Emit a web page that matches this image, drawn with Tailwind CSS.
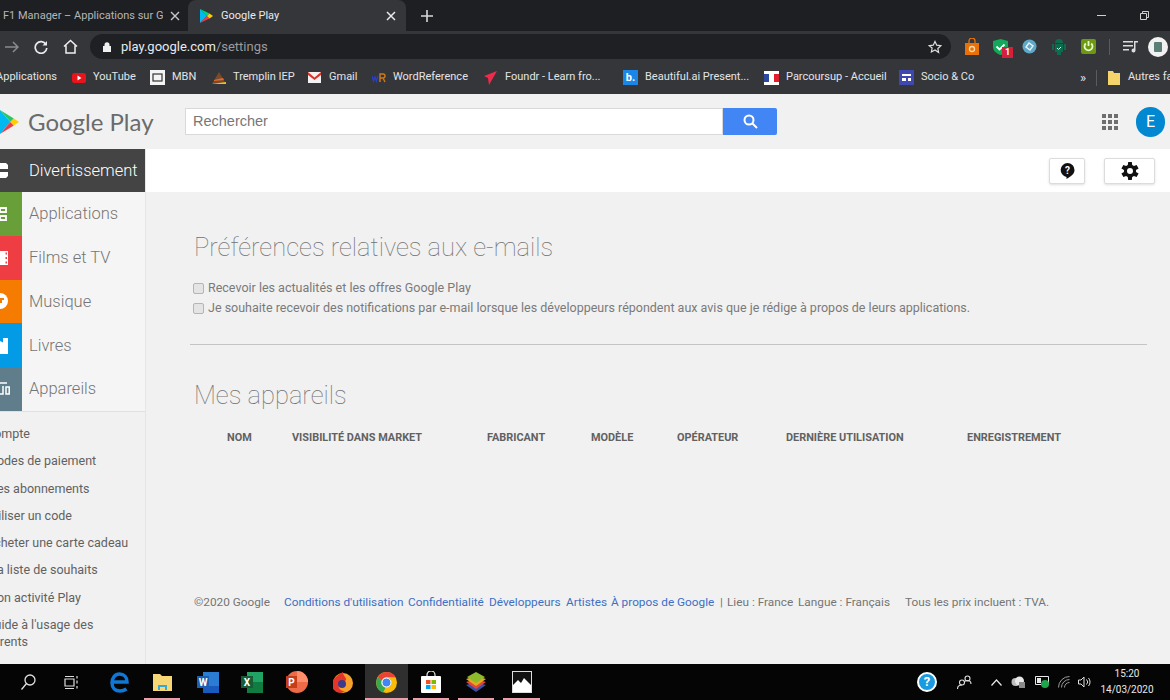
<!DOCTYPE html>
<html lang="fr">
<head>
    <meta charset="UTF-8">
    <title>Google Play</title>
    <script src="https://cdn.jsdelivr.net/npm/@tailwindcss/browser@4"></script>
</head>
<body class="bg-[#f1f1f1] font-['Roboto',sans-serif]">
<div class="w-[1170px] h-[700px] overflow-hidden flex flex-col">

    <!-- tabs -->
    <div class="h-[31px] bg-[#1e1f23] flex items-end text-[11px] shrink-0">
        <div class="w-[188px] h-[31px] pl-[3px] flex items-center text-[#b5b6b8] shrink-0">
            <span class="w-[160px] pt-[2px] whitespace-nowrap overflow-hidden">F1 Manager – Applications sur Google Play</span>
            <svg class="ml-[7px]" width="10" height="10" viewBox="0 0 10 10" stroke="#c8c8c8" stroke-width="1.4"><path d="M1 1l8 8M9 1l-8 8"/></svg>
        </div>
        <div class="w-[218px] h-[31px] bg-[#35363a] rounded-t-lg flex items-center pl-[12px] text-[#e8eaed] shrink-0">
            <svg width="13" height="14" viewBox="0 0 13 14"><path d="M0 0v14l7-7z" fill="#00b9f1"/><path d="M0 0l7 7 2.500-2.500z" fill="#00d77a"/><path d="M0 14l7-7 2.500 2.500z" fill="#ef3b45"/><path d="M9.500 4.500L7 7l2.500 2.500L13 7z" fill="#ffce00"/></svg>
            <span class="ml-[8px] pt-[2px] w-[165px]">Google Play</span>
            <svg width="10" height="10" viewBox="0 0 10 10" stroke="#e8eaed" stroke-width="1.5"><path d="M1 1l8 8M9 1l-8 8"/></svg>
        </div>
        <svg class="ml-[15px] mb-[9px]" width="12" height="12" viewBox="0 0 12 12" stroke="#d8d8d8" stroke-width="1.600"><path d="M6 0v12M0 6h12"/></svg>
        <div class="ml-auto flex items-center h-[31px] pr-[21px]">
            <div class="w-[9px] h-px bg-[#d0d0d0]"></div>
            <svg class="ml-[34px]" width="9" height="9" viewBox="0 0 9 9" fill="none" stroke="#d0d0d0"><path d="M.5 2.500h6v6h-6zM2.500 2.500v-2h6v6h-2"/></svg>
        </div>
    </div>

    <!-- toolbar -->
    <div class="h-[31px] bg-[#35363a] flex items-center shrink-0">
        <svg class="ml-[5px]" width="14" height="12" viewBox="0 0 14 12" fill="none" stroke="#8a8b8d" stroke-width="1.500"><path d="M0 6h13M8 1l5 5-5 5"/></svg>
        <svg class="ml-[15px]" width="14" height="14" viewBox="0 0 14 14" fill="none" stroke="#e8eaed" stroke-width="1.700"><path d="M12 4.500A5.800 5.800 0 1 0 12.800 8"/><path d="M13 1v4.500H8.500" fill="#e8eaed" stroke="none"/></svg>
        <svg class="ml-[15px]" width="15" height="15" viewBox="0 0 15 15" fill="none" stroke="#f0f0f0" stroke-width="1.500"><path d="M1 7.500L7.500 1.500 14 7.500M3 6.500V14h9V6.500"/></svg>
        <div class="ml-[12px] w-[861px] h-[25px] bg-[#1f2023] rounded-full flex items-center pl-[13px] pr-[9px] text-[13px] shrink-0">
            <svg width="8" height="10" viewBox="0 0 8 10"><path d="M1.500 4V2.800a2.500 2.500 0 0 1 5 0V4H8v6H0V4z" fill="#f0f0f0"/></svg>
            <span class="ml-[10px] text-[#e8eaed]">play.google.com<span class="text-[#9a9b9e]">/settings</span></span>
            <svg class="ml-auto" width="14" height="14" viewBox="0 0 24 24" fill="none" stroke="#e0e0e0" stroke-width="2"><path d="M12 2.500l3 6.400 7 .9-5.100 4.800 1.300 6.900L12 17.100l-6.200 3.400 1.300-6.900L2 9.800l7-.9z"/></svg>
        </div>
        <svg class="ml-[13px] shrink-0" width="16" height="17" viewBox="0 0 16 17"><path d="M1 5h14v12H1z" fill="#e8710a"/><path d="M5 5V3a3 3 0 0 1 6 0v2" fill="none" stroke="#e8710a" stroke-width="1.300"/><circle cx="8" cy="11" r="2.500" fill="none" stroke="#ffd9a8" stroke-width="1.300"/></svg>
        <div class="ml-[13px] relative w-[16px] h-[16px] shrink-0">
            <svg width="15" height="16" viewBox="0 0 15 16"><path d="M0 2l7.500-2L15 2v6c0 4-3.500 6.500-7.500 8C3.500 14.500 0 12 0 8z" fill="#14a85a"/><path d="M3.500 7.500l3 3 5-5" fill="none" stroke="#fff" stroke-width="1.800"/></svg>
            <span class="absolute left-[9px] top-[8px] w-[11px] h-[11px] bg-[#d3203c] text-white text-[9px] leading-[11px] text-center font-bold">1</span>
        </div>
        <svg class="ml-[13px] shrink-0" width="15" height="15" viewBox="0 0 15 15"><circle cx="7.500" cy="7.500" r="7" fill="#5fa8c7"/><path d="M4 8l3-4 4 3-3 4z" fill="none" stroke="#e4f2f7" stroke-width="1.400"/></svg>
        <svg class="ml-[15px] shrink-0" width="14" height="16" viewBox="0 0 14 16"><path d="M3 4a4 4 0 0 1 8 0zM3 5h8v8H9v3H5v-3H3zM0 5h2v6H0zM12 5h2v6h-2z" fill="#0f6b4d"/><path d="M5 9l1.500 1.500L9 8" fill="none" stroke="#d8f5e5"/></svg>
        <div class="ml-[15px] w-[15px] h-[15px] bg-[#6b9a12] rounded-[2px] flex items-center justify-center shrink-0">
            <svg width="11" height="11" viewBox="0 0 11 11" fill="none" stroke="#eaf5c8" stroke-width="1.800"><path d="M5.500 0v5M2.800 2.500a4 4 0 1 0 5.400 0"/></svg>
        </div>
        <div class="ml-[13px] w-px h-[16px] bg-[#5a5b5e] shrink-0"></div>
        <svg class="ml-[13px] shrink-0" width="15" height="13" viewBox="0 0 15 13" fill="#dcdcdc"><path d="M0 1h10v1.500H0zM0 5h10v1.500H0zM0 9h6v1.500H0zM11 1h4v1.500h-2.500v8a2 2 0 1 1-1.500-2z"/></svg>
        <div class="ml-[10px] w-[20px] h-[20px] rounded-full bg-[#f2f2f2] flex items-center justify-center shrink-0">
            <div class="w-[8px] h-[10px] bg-[#5c7f78] rounded-[1px]"></div>
        </div>
    </div>

    <!-- bookmarks -->
    <div class="h-[32px] pb-[1px] bg-[#35363a] flex items-center text-[11px] text-[#e3e4e6] whitespace-nowrap overflow-hidden shrink-0">
        <div class="w-[57px] overflow-hidden flex justify-end shrink-0"><span>Applications</span></div>
        <div class="ml-[15px] w-[78px] flex items-center gap-[7px] shrink-0">
            <svg width="14" height="10" viewBox="0 0 14 10"><rect width="14" height="10" rx="2.500" fill="#e8141c"/><path d="M5.500 2.500v5l4-2.500z" fill="#fff"/></svg><span>YouTube</span>
        </div>
        <div class="w-[62px] flex items-center gap-[7px] shrink-0">
            <svg width="15" height="15" viewBox="0 0 15 15"><rect width="15" height="15" fill="#f4f4f4"/><rect x="3" y="4" width="9" height="7" fill="none" stroke="#333" stroke-width="1.200"/></svg><span>MBN</span>
        </div>
        <div class="w-[96px] flex items-center gap-[7px] shrink-0">
            <svg width="14" height="12" viewBox="0 0 14 12"><path d="M0 12l7-12 7 12z" fill="#7a4a2a"/><path d="M0 12l14-2v2z" fill="#f0c020"/><path d="M2 8l9-2 1 2-10 1z" fill="#e06a2a"/></svg><span>Tremplin IEP</span>
        </div>
        <div class="w-[64px] flex items-center gap-[8px] shrink-0">
            <svg width="13" height="11" viewBox="0 0 13 11"><rect width="13" height="11" fill="#f2f2f2"/><path d="M0 0l6.500 5.500L13 0v3L6.500 8 0 3z" fill="#d9362b"/></svg><span>Gmail</span>
        </div>
        <div class="w-[112px] flex items-center gap-[7px] shrink-0">
            <svg width="14" height="10" viewBox="0 0 14 10"><path d="M0 3l1.500 5L3 4l1.500 4L6 3" fill="none" stroke="#2a3fc0" stroke-width="1.400"/><path d="M8 9V1h3a2 2 0 0 1 0 4H8m3 0l2 4" fill="none" stroke="#d07a1a" stroke-width="1.400"/></svg><span>WordReference</span>
        </div>
        <div class="w-[139px] flex items-center gap-[8px] shrink-0">
            <svg width="13" height="14" viewBox="0 0 13 14"><path d="M13 0L0 5l4 2 1 7z" fill="#ee2b4b"/></svg><span class="w-[98px]">Foundr - Learn fro...</span>
        </div>
        <div class="w-[141px] flex items-center gap-[7px] shrink-0">
            <div class="w-[15px] h-[15px] bg-[#1a86e8] text-white text-[11px] font-bold leading-[15px] text-center">b.</div><span>Beautiful.ai Present...</span>
        </div>
        <div class="w-[135px] flex items-center gap-[7px] shrink-0">
            <svg width="15" height="14" viewBox="0 0 15 14"><rect width="15" height="14" fill="#fff"/><rect y="3" width="5" height="8" fill="#2a4aa0"/><rect x="10" y="3" width="5" height="8" fill="#e0202c"/></svg><span>Parcoursup - Accueil</span>
        </div>
        <div class="w-[181px] flex items-center gap-[7px] shrink-0">
            <svg width="15" height="15" viewBox="0 0 15 15"><rect width="15" height="15" fill="#3f48b0"/><path d="M3 4h9v2H3zM3 8h4v3H3zM9 8h3v3H9z" fill="#fff"/></svg><span>Socio &amp; Co</span>
        </div>
        <span class="w-[16px] text-[13px] leading-none shrink-0">»</span>
        <div class="w-px h-[16px] bg-[#5a5b5e] shrink-0"></div>
        <svg class="ml-[11px] shrink-0" width="12" height="14" viewBox="0 0 12 14"><path d="M0 0h5l1 2h6v12H0z" fill="#f4d36b"/></svg>
        <span class="ml-[8px] shrink-0">Autres favoris</span>
    </div>

    <!-- play header -->
    <div class="h-[55px] bg-[#f1f1f1] flex items-center shrink-0">
        <svg class="shrink-0" width="19" height="28" viewBox="-3 0 22 28"><path d="M-3 0v28L9 14z" fill="#00b9f1"/><path d="M-3 0L9 14l4-4z" fill="#2bc46a"/><path d="M-3 28L9 14l4 4z" fill="#ef3b45"/><path d="M13 10l-4 4 4 4 6-4z" fill="#ffce00"/></svg>
        <span class="ml-[9px] w-[157px] text-[24px] leading-none text-[#6b6b6b] whitespace-nowrap font-['Lato',sans-serif]">Google Play</span>
        <div class="w-[538px] h-[27px] bg-white border border-[#d9d9d9] pl-[7px] text-[14.500px] leading-[24px] text-[#777] font-['Liberation_Sans',sans-serif] shrink-0">Rechercher</div>
        <div class="w-[54px] h-[27px] bg-[#4285f4] rounded-r-[2px] flex items-center justify-center shrink-0">
            <svg width="15" height="15" viewBox="0 0 15 15" fill="none" stroke="#fff" stroke-width="2"><circle cx="6" cy="6" r="4.500"/><path d="M9.500 9.500L14 14"/></svg>
        </div>
        <svg class="ml-[325px] shrink-0" width="16" height="16" viewBox="0 0 16 16" fill="#6e6e6e"><path d="M0 0h4v4H0zM6 0h4v4H6zM12 0h4v4h-4zM0 6h4v4H0zM6 6h4v4H6zM12 6h4v4h-4zM0 12h4v4H0zM6 12h4v4H6zM12 12h4v4h-4z"/></svg>
        <div class="ml-[18px] w-[29px] h-[30px] rounded-full bg-[#0288d1] text-white text-[16px] flex items-center justify-center shrink-0">E</div>
    </div>

    <!-- body -->
    <div class="flex h-[515px] shrink-0">
        <nav class="w-[146px] border-r border-[#e6e6e6] shrink-0 overflow-hidden">
            <div class="h-[43px] bg-[#444444] flex items-center text-white text-[16.500px] font-light">
                <div class="w-[22px] h-full flex items-center"><svg width="8" height="15" viewBox="0 0 8 15" fill="#fff"><path d="M0 0h6l2 2v4H0zM0 9h8v4l-2 2H0z"/></svg></div>
                <span class="ml-[7px] pt-[2px] whitespace-nowrap">Divertissement</span>
            </div>
            <div class="h-[43.750px] bg-[#f5f5f5] flex items-center text-[#757575] text-[16.500px] font-light">
                <div class="w-[22px] h-full bg-[#689f38] flex items-center"><svg width="7" height="14" viewBox="0 0 7 14" fill="none" stroke="#fff" stroke-width="1.800"><path d="M0 1h6v4H0zM0 9h6v4H0z"/></svg></div>
                <span class="ml-[7px] pt-[1px]">Applications</span>
            </div>
            <div class="h-[43.750px] bg-[#f5f5f5] flex items-center text-[#757575] text-[16.500px] font-light">
                <div class="w-[22px] h-full bg-[#ee3e43] flex items-center"><svg width="8" height="14" viewBox="0 0 8 14"><rect width="8" height="14" fill="#fff"/><path d="M5.500 1.500h1.500v2H5.500zM5.500 6h1.500v2H5.500zM5.500 10.500h1.500v2H5.500z" fill="#ee3e43"/></svg></div>
                <span class="ml-[7px] pt-[2px]">Films et TV</span>
            </div>
            <div class="h-[43.750px] bg-[#f5f5f5] flex items-center text-[#757575] text-[16.500px] font-light">
                <div class="w-[22px] h-full bg-[#f57c00] flex items-center"><svg width="8" height="16" viewBox="0 0 8 16"><path d="M0 0a8 8 0 0 1 0 16z" fill="#fff"/><path d="M0 5h4v2H2v3H0z" fill="#f57c00"/></svg></div>
                <span class="ml-[7px] pt-[2px]">Musique</span>
            </div>
            <div class="h-[43.750px] bg-[#f5f5f5] flex items-center text-[#757575] text-[16.500px] font-light">
                <div class="w-[22px] h-full bg-[#039be5] flex items-center"><svg width="8" height="17" viewBox="0 0 8 17"><path d="M0 4l3 1.500V1h5v16H0z" fill="#fff"/></svg></div>
                <span class="ml-[7px] pt-[2px]">Livres</span>
            </div>
            <div class="h-[44.500px] bg-[#f5f5f5] flex items-center text-[#757575] text-[16.500px] font-light border-b border-[#e0e0e0]">
                <div class="w-[22px] h-full bg-[#607d8b] flex items-center"><svg width="10" height="13" viewBox="0 0 10 13" fill="none" stroke="#fff" stroke-width="1.500"><path d="M0 1h7M0 12h3V4M6 5h3.200v7H6z"/></svg></div>
                <span class="ml-[7px] pt-[2px]">Appareils</span>
            </div>
            <div class="pt-[8.500px] -ml-[14px] text-[12.500px] text-[#616161] leading-[27.300px] whitespace-nowrap">
                <p>Compte</p>
                <p>Modes de paiement</p>
                <p>Mes abonnements</p>
                <p>Utiliser un code</p>
                <p>Acheter une carte cadeau</p>
                <p>Ma liste de souhaits</p>
                <p>Mon activité Play</p>
                <p class="leading-[17px] mt-[5px]">Guide à l'usage des<br>parents</p>
            </div>
        </nav>

        <main class="flex-1 min-w-0">
            <div class="h-[43px] bg-white flex items-center justify-end pr-[15px]">
                <div class="w-[36px] h-[26px] bg-white border border-[#dcdcdc] rounded-[2px] shadow-sm flex items-center justify-center">
                    <svg width="15" height="16" viewBox="0 0 15 16"><path d="M7.500 0a7 7 0 0 1 7 7c0 4-3.500 6.500-8 9v-2.100A7 7 0 0 1 7.500 0z" fill="#111"/><text x="7.500" y="11" text-anchor="middle" font-size="10" font-weight="700" fill="#fff" font-family="Roboto">?</text></svg>
                </div>
                <div class="ml-[19px] w-[51px] h-[26px] bg-white border border-[#dcdcdc] rounded-[2px] shadow-sm flex items-center justify-center">
                    <svg width="18" height="18" viewBox="3 3 18 18" fill="#111"><path fill-rule="evenodd" d="M18 13a6 6 0 0 0 0-2l2.600-1.600-2-3.500-2.700 1a6 6 0 0 0-1.700-1L13.800 3h-3.600l-.4 2.900a6 6 0 0 0-1.700 1l-2.700-1-2 3.500L6 11a6 6 0 0 0 0 2l-2.600 1.600 2 3.500 2.700-1a6 6 0 0 0 1.700 1l.4 2.900h3.600l.4-2.900a6 6 0 0 0 1.700-1l2.700 1 2-3.500zM12 15a3 3 0 1 1 0-6 3 3 0 0 1 0 6z"/></svg>
                </div>
            </div>

            <div class="pl-[48px] pr-[23px]">
                <h2 class="mt-[39px] text-[25.500px] leading-[32px] font-thin text-[#707070] whitespace-nowrap">Préférences relatives aux e-mails</h2>
                <div class="mt-[15px] text-[12.500px] leading-[20px] text-[#7a7a7a] whitespace-nowrap">
                    <label class="flex items-center h-[20px]"><span class="w-[11px] h-[11px] bg-[#e4e4e4] border border-[#b5b5b5] rounded-[2px] -ml-px"></span><span class="ml-[4px]">Recevoir les actualités et les offres Google Play</span></label>
                    <label class="flex items-center h-[20px]"><span class="w-[11px] h-[11px] bg-[#e4e4e4] border border-[#b5b5b5] rounded-[2px] -ml-px"></span><span class="ml-[4px]">Je souhaite recevoir des notifications par e-mail lorsque les développeurs répondent aux avis que je rédige à propos de leurs applications.</span></label>
                </div>
                <div class="mt-[26px] -ml-[4px] h-px bg-[#c4c4c4]"></div>

                <h2 class="mt-[34px] text-[25.500px] leading-[32px] font-thin text-[#707070]">Mes appareils</h2>

                <div class="mt-[20px] flex text-[10.900px] leading-[14px] font-bold text-[#616161] whitespace-nowrap">
                    <span class="ml-[33px] w-[65px]">NOM</span>
                    <span class="w-[195px]">VISIBILITÉ DANS MARKET</span>
                    <span class="w-[104px]">FABRICANT</span>
                    <span class="w-[86px]">MODÈLE</span>
                    <span class="w-[109px]">OPÉRATEUR</span>
                    <span class="w-[181px]">DERNIÈRE UTILISATION</span>
                    <span>ENREGISTREMENT</span>
                </div>

                <div class="mt-[150px] flex text-[11.800px] leading-[14px] text-[#757575] whitespace-nowrap">
                    <span class="w-[90px]">©2020 Google</span>
                    <span class="w-[124px] text-[#3d6fc4]">Conditions d'utilisation</span>
                    <span class="w-[81px] text-[#3d6fc4]">Confidentialité</span>
                    <span class="w-[77px] text-[#3d6fc4]">Développeurs</span>
                    <span class="w-[45px] text-[#3d6fc4]">Artistes</span>
                    <span class="w-[109px] text-[#3d6fc4]">À propos de Google</span>
                    <span class="w-[7px]">|</span>
                    <span class="w-[71px]">Lieu : France</span>
                    <span class="w-[107px]">Langue : Français</span>
                    <span>Tous les prix incluent : TVA.</span>
                </div>
            </div>
        </main>
    </div>

    <!-- taskbar -->
    <div class="h-[36px] bg-[#050505] flex items-center shrink-0 text-white">
        <div class="ml-[21px] w-[16px]"><svg width="15" height="16" viewBox="0 0 15 16" fill="none" stroke="#e0e0e0" stroke-width="1.300"><circle cx="9" cy="6" r="5"/><path d="M5.500 9.500L.5 15.500"/></svg></div>
        <div class="ml-[27px] w-[16px]"><svg width="15" height="15" viewBox="0 0 15 15" fill="none" stroke="#dcdcdc" stroke-width="1.200"><path d="M1 4h9v7H1zM1 1.500h9M1 13.500h9M13 1v2.500M13 5.500v3M13 11v2.500"/></svg></div>
        <div class="ml-[27px] w-[24px] flex justify-center"><svg width="19" height="21" viewBox="0 0 19 21" fill="none" stroke="#0f78d4" stroke-width="3.500"><path d="M3 10h14c0-5-3-8-7.500-8C5 2 2 6 2 11c0 5 3.500 8 8 8 2.500 0 4.500-.7 6.500-2"/></svg></div>
        <div class="ml-[18px] w-[26px] h-[36px] relative flex items-center justify-center">
            <svg width="19" height="17" viewBox="0 0 19 17"><path d="M0 0h7l2 2h10v15H0z" fill="#f6d675"/><path d="M5 16v-5h9v5h-2v-3H7v3z" fill="#36a9d8"/></svg>
            <div class="absolute -left-[5px] -right-[5px] bottom-0 h-[2px] bg-[#e9a0ab]"></div>
        </div>
        <div class="ml-[22px] w-[22px] flex justify-center"><svg width="22" height="21" viewBox="0 0 22 21"><path d="M6 0h16v21H6z" fill="#2b7cd3"/><path d="M6 14h16v7H6z" fill="#185abd"/><rect y="4" width="12" height="12" fill="#1a5fb4"/><text x="6" y="14" text-anchor="middle" font-size="10" font-weight="700" fill="#fff" font-family="Roboto">W</text></svg></div>
        <div class="ml-[22px] w-[22px] flex justify-center"><svg width="22" height="21" viewBox="0 0 22 21"><path d="M6 0h16v21H6z" fill="#21a366"/><path d="M6 10h16v11H6z" fill="#107c41"/><rect y="4" width="12" height="12" fill="#185c37"/><text x="6" y="14" text-anchor="middle" font-size="10" font-weight="700" fill="#fff" font-family="Roboto">X</text></svg></div>
        <div class="ml-[23px] w-[22px] flex justify-center"><svg width="22" height="22" viewBox="0 0 22 22"><circle cx="11" cy="11" r="11" fill="#ed6c47"/><path d="M11 0a11 11 0 0 1 11 11H11z" fill="#ff8f6b"/><rect y="5" width="11" height="12" fill="#c43e1c"/><text x="5.500" y="14.500" text-anchor="middle" font-size="10" font-weight="700" fill="#fff" font-family="Roboto">P</text></svg></div>
        <div class="ml-[24px] w-[22px] flex justify-center"><svg width="20" height="22" viewBox="0 0 20 22"><circle cx="10" cy="12" r="10" fill="#f7a02a"/><path d="M2 7a8 8 0 0 0 10 13c-6 0-8-5-5-8 2-2 5-1 6-3S10 5 10 1c-4 2-6 4-8 6z" fill="#e5352b"/><circle cx="9" cy="13" r="4" fill="#3d3a8c"/></svg></div>
        <div class="ml-[11px] w-[43px] h-[36px] relative bg-[#2f2f2f] flex items-center justify-center">
            <svg width="21" height="21" viewBox="0 0 21 21"><circle cx="10.500" cy="10.500" r="10.500" fill="#fbbc05"/><path d="M10.500 0a10.500 10.500 0 0 1 9.100 5.250H10.500a5.250 5.250 0 0 0-5 3.500L1.900 5A10.500 10.500 0 0 1 10.500 0z" fill="#ea4335"/><path d="M1.900 5l3.600 3.800a5.250 5.250 0 0 0 4 6.900L7 20.500A10.500 10.500 0 0 1 1.900 5z" fill="#34a853"/><circle cx="10.500" cy="10.500" r="4.500" fill="#4285f4" stroke="#fff"/></svg>
            <div class="absolute left-0 right-0 bottom-0 h-[2px] bg-[#e9a0ab]"></div>
        </div>
        <div class="ml-[5px] w-[36px] h-[36px] relative flex items-center justify-center">
            <svg width="20" height="22" viewBox="0 0 20 22"><path d="M6 6V4a4 4 0 0 1 8 0v2" fill="none" stroke="#eee" stroke-width="1.200"/><rect y="5" width="20" height="17" rx="1" fill="#fff"/><path d="M5 9h4.500v4H5z" fill="#f25022"/><path d="M10.500 9H15v4h-4.500z" fill="#7fba00"/><path d="M5 14h4.500v4H5z" fill="#00a4ef"/><path d="M10.500 14H15v4h-4.500z" fill="#ffb900"/></svg>
            <div class="absolute left-0 right-0 bottom-0 h-[2px] bg-[#e9a0ab]"></div>
        </div>
        <div class="ml-[9px] w-[36px] h-[36px] relative flex items-center justify-center">
            <svg width="20" height="20" viewBox="0 0 20 20"><path d="M10 10l10 3-10 7-10-7z" fill="#3b4fa8"/><path d="M10 7l10 3-10 7-10-7z" fill="#e0463a"/><path d="M10 4l10 3-10 7-10-7z" fill="#e8a81e"/><path d="M10 0l9 5-9 6-9-6z" fill="#8cbb2e"/></svg>
            <div class="absolute left-0 right-0 bottom-0 h-[2px] bg-[#e9a0ab]"></div>
        </div>
        <div class="ml-[9px] w-[37px] h-[36px] relative flex items-center justify-center">
            <svg width="20" height="22" viewBox="0 0 20 22"><rect x=".5" y=".5" width="19" height="21" fill="#111" stroke="#ddd"/><path d="M1 21V14l5-5 3 3 3-5 7 7v7z" fill="#fff"/></svg>
            <div class="absolute left-0 right-0 bottom-0 h-[2px] bg-[#e9a0ab]"></div>
        </div>
        <div class="ml-[377px] w-[20px] h-[20px] rounded-full bg-[#1a9ae0] border-2 border-white text-white text-[13px] font-bold leading-[16px] text-center shrink-0">?</div>
        <svg class="ml-[20px] shrink-0" width="15" height="15" viewBox="0 0 15 15" fill="none" stroke="#e0e0e0" stroke-width="1.100"><circle cx="5" cy="7.500" r="2.500"/><circle cx="10.500" cy="3.500" r="2.500"/><path d="M.5 14c0-2.500 2-4 4.500-4M7 7c1-1 2-1.500 3.500-1.500 2 0 3.500 1.500 3.500 3.500"/></svg>
        <svg class="ml-[19px] shrink-0" width="11" height="7" viewBox="0 0 11 7" fill="none" stroke="#e8e8e8" stroke-width="1.200"><path d="M.5 6.500l5-5.500 5 5.500"/></svg>
        <svg class="ml-[9px] shrink-0" width="15" height="12" viewBox="0 0 15 12"><circle cx="4.500" cy="6" r="4" fill="#bdbdbd"/><circle cx="8.500" cy="5" r="4.500" fill="#e8e8e8"/><rect x="8" y="6" width="6" height="6" fill="#8a8a8a"/></svg>
        <div class="ml-[9px] relative w-[14px] h-[12px] shrink-0">
            <svg width="14" height="9" viewBox="0 0 14 9" fill="none" stroke="#e8e8e8"><path d="M.5.500h13v8H.5z"/><path d="M2 2h4v5H2z" fill="#e8e8e8" stroke="none"/></svg>
            <div class="absolute left-[6px] top-[4px] w-[8px] h-[8px] rounded-full bg-[#1ea64c]"></div>
        </div>
        <svg class="ml-[9px] shrink-0" width="13" height="12" viewBox="0 0 13 12" fill="none" stroke="#9a9a9a"><path d="M.5 11.500A11 11 0 0 1 11.500.5M3.500 11.500a8 8 0 0 1 8-8M6.500 11.500a5 5 0 0 1 5-5"/></svg>
        <svg class="ml-[7px] shrink-0" width="14" height="12" viewBox="0 0 14 12" fill="none" stroke="#e0e0e0"><path d="M.5 4h2.500l3-3v10L3 8H.5zM8.500 3.500a3.500 3.500 0 0 1 0 5M10.500 2a6 6 0 0 1 0 8"/></svg>
        <div class="ml-[6px] w-[58px] text-center text-[10px] leading-[16px] text-[#e8e8e8] shrink-0 whitespace-nowrap"><div>15:20</div><div>14/03/2020</div></div>
    </div>
</div>
</body>
</html>
